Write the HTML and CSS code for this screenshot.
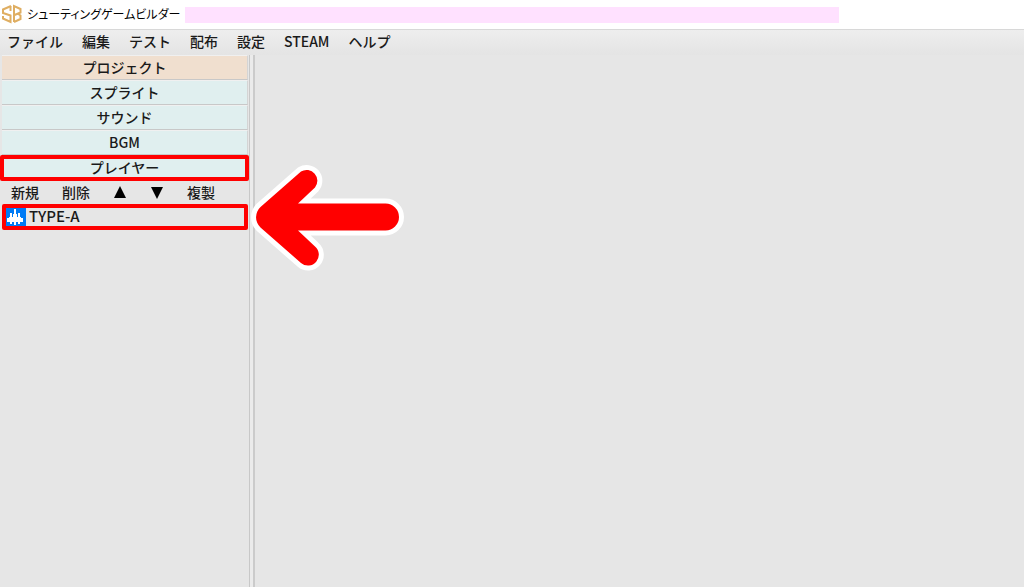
FILE: index.html
```html
<!DOCTYPE html>
<html lang="ja">
<head>
    <meta charset="UTF-8">
    <title>シューティングゲームビルダー</title>
    <link rel="stylesheet" href="styles.css">
</head>
<body>
    <header class="titlebar">
        <svg class="logo" viewBox="0 0 20 20" fill="none" stroke="#dfae62" stroke-width="2">
            <path d="M9 2 L1 5.500 V9 L8.500 11.500 V18 L1 14.500 V12"/>
            <path d="M8.500 2 V7"/>
            <path d="M12 18 V2 L18.500 5 V8.500 L12.500 11 M15.500 9.500 L18.500 11.500 V15 L12 18"/>
        </svg>
        <h1>シューティングゲームビルダー</h1>
        <div class="title-mask"></div>
    </header>
    <nav class="menubar">
        <button>ファイル</button>
        <button>編集</button>
        <button>テスト</button>
        <button>配布</button>
        <button>設定</button>
        <button>STEAM</button>
        <button>ヘルプ</button>
    </nav>
    <div class="workspace">
        <aside class="sidebar">
            <div class="tabs">
                <button class="tab project">プロジェクト</button>
                <button class="tab">スプライト</button>
                <button class="tab">サウンド</button>
                <button class="tab">BGM</button>
                <button class="tab marked">プレイヤー</button>
            </div>
            <div class="toolbar">
                <button>新規</button>
                <button>削除</button>
                <button aria-label="上へ"><svg width="14" height="14" viewBox="0 0 14 14"><path d="M7 1 L13 13 H1 Z"/></svg></button>
                <button aria-label="下へ"><svg width="14" height="14" viewBox="0 0 14 14"><path d="M1 2 H13 L7 14 Z"/></svg></button>
                <button>複製</button>
            </div>
            <ul class="list">
                <li>
                    <button class="item marked">
                        <svg class="ship" viewBox="0 0 20 20" fill="#fff">
                            <rect width="20" height="20" fill="#007bf5"/>
                            <path d="M8 2h2v5h1v3h1V6h2v4h1v1h2v4h-3v2h-2v-2h-2v3H8v-3H6v2H4v-2H1v-4h2v-1h1V6h2v4h1V7h1z"/>
                        </svg>
                        <span>TYPE-A</span>
                    </button>
                </li>
            </ul>
        </aside>
        <div class="splitter"></div>
        <main class="editor">
            <svg class="arrow" width="156" height="110" viewBox="250 162 156 110">
                <path d="M385.500 203.500 A13.500 13.500 0 0 1 385.500 230.500 H298 L315 246.500 A10.800 10.800 0 0 1 301 263 L260.500 227.500 A14 14 0 0 1 260.500 207 L301 171.500 A10.800 10.800 0 0 1 315 187.500 L298 203.500 Z"/>
            </svg>
        </main>
    </div>
</body>
</html>
```

FILE: styles.css
```css
* { box-sizing: border-box; }
body {
    margin: 0;
    min-height: 100vh;
    display: flex;
    flex-direction: column;
    background: #e6e6e6;
    color: #1a1a1a;
    font-family: "Noto Sans CJK JP", sans-serif;
    font-size: 14px;
    font-weight: 500;
    line-height: 20px;
}
button {
    margin: 0;
    padding: 0;
    border: none;
    background: none;
    color: inherit;
    font: inherit;
    cursor: pointer;
}

.titlebar {
    display: flex;
    align-items: center;
    height: 29px;
    padding-left: 2px;
    background: #fff;
}
.logo { width: 20px; height: 20px; margin: 0 5px 2px 0; }
.titlebar h1 {
    width: 158px;
    margin: 0;
    padding-bottom: 2px;
    font-size: 12px;
    font-weight: 400;
    font-feature-settings: "palt";
    color: #000;
    white-space: nowrap;
}
.title-mask { width: 64%; height: 16px; background: #ffe1ff; }

.menubar {
    display: flex;
    gap: 19px;
    height: 26px;
    padding: 0 0 4px 7px;
    border-top: 1px solid #d8d8d8;
    background: linear-gradient(#eeeeee, #e4e4e4);
}

.workspace { display: flex; flex: 1; }
.sidebar { width: 250px; padding: 0 1px 0 2px; border-right: 1px solid #c8c8c8; }
.tab {
    display: block;
    position: relative;
    width: 100%;
    height: 25px;
    padding-bottom: 2px;
    border-top: 1px solid #f0f0f0;
    border-bottom: 1px solid #c8c8c8;
    border-right: 1px solid #d4d4d4;
    background: #e0efef;
}
.tab.project { background: #f0dfcf; }

/* red frames around the current tab and the selected item */
.marked::after {
    content: "";
    position: absolute;
    inset: 0;
    border: 4px solid #ff0000;
    border-radius: 2px;
}
.tab.marked::after { inset: -1px -2px -2px -2px; }

.toolbar {
    display: flex;
    align-items: center;
    gap: 23px;
    height: 24px;
    padding-left: 9px;
}
.toolbar svg { display: block; fill: #000; }
.list { margin: 0; padding: 0; list-style: none; }
.item {
    display: flex;
    align-items: center;
    gap: 3px;
    position: relative;
    width: 100%;
    height: 26px;
    padding: 0 0 2px 4px;
    font-size: 15px;
}
.ship { width: 20px; height: 20px; margin-top: 2px; }

.splitter { width: 5px; border-left: 3px solid #ebebeb; border-right: 2px solid #cbcbcb; }
.editor { position: relative; flex: 1; }
.arrow {
    position: absolute;
    top: 107px;
    left: -5px;
    overflow: visible;
}
.arrow path {
    fill: #ff0000;
    stroke: #fff;
    stroke-width: 10px;
    stroke-linejoin: round;
    paint-order: stroke;
}
```
